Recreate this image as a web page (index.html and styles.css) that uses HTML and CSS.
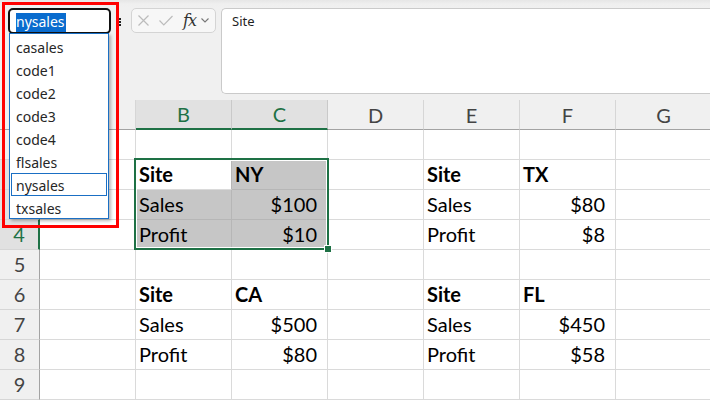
FILE: index.html
```html
<!DOCTYPE html>
<html>
<head>
<meta charset="utf-8">
<link rel="stylesheet" href="styles.css">
</head>
<body>
<div class="app">
  <div class="toolbar">
    <div class="namebox"><span class="nb-sel">nysales</span></div>
    <div class="kebab"><i></i><i></i><i></i></div>
    <div class="fxgroup">
      <svg class="ic-x" width="11" height="11" viewBox="0 0 11 11"><path d="M0.5 0.5 L10.5 10.5 M10.5 0.5 L0.5 10.5" stroke="#bcbcbc" stroke-width="1.2" fill="none"/></svg>
      <svg class="ic-check" width="14" height="11" viewBox="0 0 14 11"><path d="M0.5 5.5 L4.8 9.8 L13.5 1" stroke="#bcbcbc" stroke-width="1.2" fill="none"/></svg>
      <span class="fx">fx</span>
      <svg class="ic-chev" width="8" height="5" viewBox="0 0 8 5"><path d="M0.5 0.5 L4 4 L7.5 0.5" stroke="#777" stroke-width="1.1" fill="none"/></svg>
    </div>
    <div class="formula">Site</div>
  </div>
  <div class="spacer"></div>
  <div class="sheet">
    <div class="grid">
      <div class="corner"></div>
      <div class="ch"></div>
      <div class="ch on">B</div>
      <div class="ch on">C</div>
      <div class="ch">D</div>
      <div class="ch">E</div>
      <div class="ch">F</div>
      <div class="ch">G</div>

      <div class="rh"></div>
      <div class="c"></div><div class="c"></div><div class="c"></div><div class="c"></div><div class="c"></div><div class="c"></div><div class="c"></div>

      <div class="rh on"></div>
      <div class="c"></div><div class="c b active">Site</div><div class="c b sel">NY</div><div class="c"></div><div class="c b">Site</div><div class="c b">TX</div><div class="c"></div>

      <div class="rh on"></div>
      <div class="c"></div><div class="c sel">Sales</div><div class="c num sel">$100</div><div class="c"></div><div class="c">Sales</div><div class="c num">$80</div><div class="c"></div>

      <div class="rh on">4</div>
      <div class="c"></div><div class="c sel">Profit</div><div class="c num sel">$10</div><div class="c"></div><div class="c">Profit</div><div class="c num">$8</div><div class="c"></div>

      <div class="rh">5</div>
      <div class="c"></div><div class="c"></div><div class="c"></div><div class="c"></div><div class="c"></div><div class="c"></div><div class="c"></div>

      <div class="rh">6</div>
      <div class="c"></div><div class="c b">Site</div><div class="c b">CA</div><div class="c"></div><div class="c b">Site</div><div class="c b">FL</div><div class="c"></div>

      <div class="rh">7</div>
      <div class="c"></div><div class="c">Sales</div><div class="c num">$500</div><div class="c"></div><div class="c">Sales</div><div class="c num">$450</div><div class="c"></div>

      <div class="rh">8</div>
      <div class="c"></div><div class="c">Profit</div><div class="c num">$80</div><div class="c"></div><div class="c">Profit</div><div class="c num">$58</div><div class="c"></div>

      <div class="rh">9</div>
      <div class="c"></div><div class="c"></div><div class="c"></div><div class="c"></div><div class="c"></div><div class="c"></div><div class="c"></div>
    </div>
    <div class="selection"><div class="handle"></div></div>
  </div>

  <ul class="dropdown">
    <li>casales</li>
    <li>code1</li>
    <li>code2</li>
    <li>code3</li>
    <li>code4</li>
    <li>flsales</li>
    <li class="current">nysales</li>
    <li>txsales</li>
  </ul>
  <div class="annot"></div>
</div>
</body>
</html>
```

FILE: styles.css
```css
* { box-sizing: border-box; }
html, body { margin: 0; padding: 0; }
body { width: 710px; height: 400px; overflow: hidden; background: #f0f0f0; }

.app {
  position: relative;
  width: 710px;
  height: 400px;
  overflow: hidden;
  display: flex;
  flex-direction: column;
  background: #f0f0f0;
  font-family: "Noto Sans", "Open Sans", sans-serif;
}

/* ---------- toolbar ---------- */
.toolbar {
  height: 94px;
  flex: none;
  display: flex;
  align-items: flex-start;
  padding-top: 8px;
  padding-left: 8px;
  background: linear-gradient(#e6e6e6 0, #efefef 4px, #f0f0f0 8px);
}
.namebox {
  width: 103px;
  height: 26px;
  border: 2px solid #111;
  border-radius: 5px;
  background: #fff;
  display: flex;
  align-items: center;
  padding-left: 6px;
  flex: none;
}
.nb-sel {
  background: #0a6cce;
  color: #fff;
  font-size: 14px;
  line-height: 18px;
  padding: 0 1px 1px 0;
  margin-top: 3px;
}
.kebab {
  flex: none;
  width: 3px;
  margin-left: 8px;
  margin-top: 10px;
  display: flex;
  flex-direction: column;
  gap: 1px;
}
.kebab i { display: block; width: 2px; height: 2px; background: #222; }

.fxgroup {
  flex: none;
  margin-left: 9px;
  width: 85px;
  height: 25px;
  border: 1px solid #d4d4d4;
  border-radius: 5px;
  background: #f7f7f7;
  display: flex;
  align-items: center;
  padding-left: 6px;
}
.ic-x { flex: none; }
.ic-check { flex: none; margin-left: 10px; }
.fx {
  font-family: "DejaVu Serif", "Liberation Serif", serif;
  font-style: italic;
  font-size: 16px;
  color: #333;
  margin-left: 10px;
  line-height: 20px;
  letter-spacing: -1px;
}
.ic-chev { flex: none; margin-left: 5px; }

.formula {
  flex: 1;
  margin-left: 5px;
  height: 86px;
  background: #fff;
  border: 1px solid #cacaca;
  border-right: none;
  border-radius: 5px 0 0 5px;
  font-size: 13px;
  color: #1f1f1f;
  padding: 3px 10px;
  line-height: 18px;
}
.spacer { height: 6px; flex: none; }

/* ---------- sheet ---------- */
.sheet { position: relative; flex: none; }
.grid {
  display: grid;
  grid-template-columns: 40px repeat(7, 96px);
  grid-auto-rows: 30px;
  width: 712px;
  font-family: Lato, "Open Sans", sans-serif;
  font-size: 20px;
}
.corner {
  background: #f0f0f0;
  border-right: 1px solid #a3a3a3;
  border-bottom: 1px solid #a3a3a3;
}
.ch {
  background: #f0f0f0;
  border-right: 1px solid #d6d6d6;
  border-bottom: 1px solid #a3a3a3;
  color: #444;
  display: flex;
  align-items: center;
  justify-content: center;
  line-height: 24px;
}
.ch.on {
  background: #e1e1e1;
  color: #1e7145;
  border-bottom: 2px solid #1e7145;
  border-right-color: #c9c9c9;
}
.rh {
  background: #f0f0f0;
  border-right: 1px solid #a3a3a3;
  border-bottom: 1px solid #d6d6d6;
  color: #444;
  display: flex;
  align-items: flex-end;
  justify-content: center;
  line-height: 24px;
  padding-bottom: 3px;
}
.rh.on {
  background: #e1e1e1;
  color: #1e7145;
  border-right: 2px solid #1e7145;
}
.c {
  background: #fff;
  border-right: 1px solid #dadada;
  border-bottom: 1px solid #dadada;
  color: #000;
  display: flex;
  align-items: flex-end;
  line-height: 24px;
  padding: 0 3px 3px 3px;
  white-space: nowrap;
}
.c.b { font-weight: 700; }
.c.num { justify-content: flex-end; padding-right: 10px; }
.c.sel { background: #c6c6c6; border-color: #b6b6b6; }
.c.active { border-right-color: #b6b6b6; }

.selection {
  position: absolute;
  left: 134px;
  top: 58px;
  width: 195px;
  height: 92px;
  border: 2px solid #1e7145;
  box-shadow: inset 0 0 0 1px #fff;
  pointer-events: none;
}
.handle {
  position: absolute;
  right: -4px;
  bottom: -4px;
  width: 6px;
  height: 6px;
  background: #1e7145;
  outline: 1px solid #fff;
}

/* ---------- dropdown menu ---------- */
.dropdown {
  position: absolute;
  left: 9px;
  top: 33px;
  width: 100px;
  height: 186px;
  margin: 0;
  padding: 1px 1px;
  list-style: none;
  background: #fff;
  border: 1px solid #1a6fc4;
  box-shadow: 2px 2px 3px rgba(0, 0, 0, 0.28);
  font-family: "Noto Sans", "Open Sans", sans-serif;
  font-size: 14px;
  color: #262626;
}
.dropdown li {
  height: 23px;
  line-height: 23px;
  padding-left: 4px;
  border: 1px solid transparent;
}
.dropdown li.current { border-color: #1a6fc4; }

/* ---------- annotation ---------- */
.annot {
  position: absolute;
  left: 2px;
  top: 2px;
  width: 117px;
  height: 226px;
  border: 3px solid #ff0000;
  pointer-events: none;
}
```
